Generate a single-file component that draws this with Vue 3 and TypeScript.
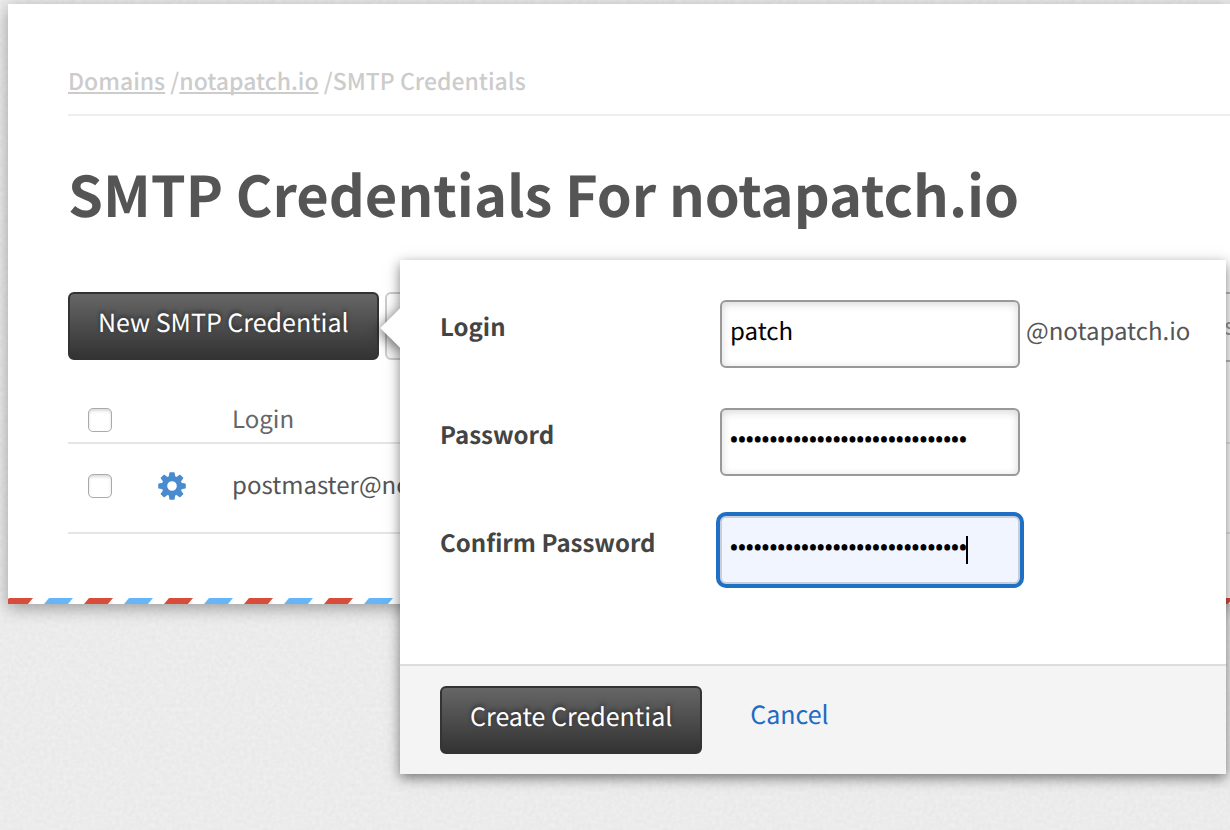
<script setup lang="ts">
import { onMounted, ref } from 'vue'

const domain = 'notapatch.io'
const login = ref('patch')
const password = ref('x'.repeat(30))
const confirmation = ref('x'.repeat(30))
const filter = ref('')
const allSelected = ref(false)
const credentials = ref([{ login: `postmaster@${domain}`, selected: false }])
const popoverOpen = ref(true)
const active = ref('confirm')
const confirmInput = ref<HTMLInputElement | null>(null)

onMounted(() => confirmInput.value?.focus({ preventScroll: true }))
</script>

<template>
  <main class="card">
    <nav class="breadcrumb" aria-label="Breadcrumb">
      <a href="#domains">Domains</a> /<a href="#domain">{{ domain }}</a> /<span>SMTP Credentials</span>
    </nav>
    <h1>SMTP Credentials For {{ domain }}</h1>

    <div class="toolbar">
      <div class="anchor">
        <button type="button" class="btn dark" @click="popoverOpen = !popoverOpen">New SMTP Credential</button>
        <form v-if="popoverOpen" class="popover" @submit.prevent>
          <div class="fields">
            <label for="login">Login</label>
            <div class="control">
              <input id="login" v-model="login" type="text" @focus="active = 'login'" />
              <span class="suffix">@{{ domain }}</span>
            </div>
            <label for="password">Password</label>
            <div class="control">
              <input id="password" v-model="password" type="password" @focus="active = 'password'" />
            </div>
            <label for="confirm">Confirm Password</label>
            <div class="control">
              <input
                id="confirm"
                ref="confirmInput"
                v-model="confirmation"
                type="password"
                :class="{ active: active === 'confirm' }"
                @focus="active = 'confirm'"
              />
              <span v-if="active === 'confirm'" class="caret"></span>
            </div>
          </div>
          <div class="actions">
            <button type="submit" class="btn dark">Create Credential</button>
            <a href="#cancel" @click.prevent="popoverOpen = false">Cancel</a>
          </div>
        </form>
      </div>
      <button type="button" class="btn light" aria-label="Delete"></button>
      <input v-model="filter" class="filter" type="text" placeholder="s" aria-label="Filter" />
    </div>

    <table>
      <thead>
        <tr>
          <th class="check"><input v-model="allSelected" type="checkbox" aria-label="Select all" /></th>
          <th class="gear"></th>
          <th class="text">Login</th>
        </tr>
      </thead>
      <tbody>
        <tr v-for="item in credentials" :key="item.login">
          <td class="check"><input v-model="item.selected" type="checkbox" :aria-label="item.login" /></td>
          <td class="gear">
            <button type="button" class="icon" aria-label="Settings">
              <svg width="28" height="28" viewBox="-14 -14 28 28">
                <g fill="#4a8bd0">
                  <path
                    v-for="n in 8"
                    :key="n"
                    :transform="`rotate(${n * 45})`"
                    d="M-3.4-8 L-2.6-13.2 Q-2.5-13.8-1.9-13.8 H1.9 Q2.5-13.8 2.6-13.2 L3.4-8Z"
                  />
                  <path fill-rule="evenodd" d="M0-10.2a10.2 10.2 0 1 0 0 20.4a10.2 10.2 0 1 0 0-20.4ZM0-4.8a4.8 4.8 0 1 1 0 9.6a4.8 4.8 0 1 1 0-9.6Z" />
                </g>
              </svg>
            </button>
          </td>
          <td class="text">{{ item.login }}</td>
        </tr>
      </tbody>
    </table>
    <div class="airmail"></div>
  </main>
</template>

<style>
body {
  margin: 0;
  min-height: 100vh;
  overflow: hidden;
  background-color: #e8e8e8;
  background-image: url("data:image/svg+xml,%3Csvg xmlns='http://www.w3.org/2000/svg' width='200' height='200'%3E%3Cfilter id='n' x='0' y='0' width='1' height='1'%3E%3CfeTurbulence type='fractalNoise' baseFrequency='.25' numOctaves='2' stitchTiles='stitch'/%3E%3CfeColorMatrix values='0 0 0 0 1 0 0 0 0 1 0 0 0 0 1 .5 0 0 0 -.1'/%3E%3C/filter%3E%3Crect width='200' height='200' filter='url(%23n)'/%3E%3C/svg%3E");
}
</style>

<style scoped>
* {
  box-sizing: border-box;
}
.card {
  margin: 4px 0 0 8px;
  padding-left: 60px;
  background: #fff;
  box-shadow: 0 4px 16px rgba(0, 0, 0, 0.35);
  color: #555;
  font-family: "Noto Sans CJK SC", "Noto Sans", sans-serif;
  font-size: 24px;
  line-height: 36px;
  text-rendering: geometricPrecision;
}
.breadcrumb {
  padding: 58px 0 16px;
  border-bottom: 2px solid #eee;
  color: #ccc;
  font-size: 23px;
  font-weight: 500;
}
.breadcrumb a {
  color: inherit;
  text-decoration-thickness: 2px;
  text-underline-offset: 2px;
  text-decoration-skip-ink: none;
}
h1 {
  margin: 30px 0 50px;
  font-size: 56px;
  line-height: 96px;
  font-weight: 700;
  white-space: nowrap;
}
.toolbar {
  display: flex;
  gap: 6px;
}
.anchor {
  position: relative;
}
.btn {
  height: 68px;
  padding: 0 28px 8px;
  border: 2px solid #333;
  border-radius: 6px;
  font: inherit;
  font-size: 25px;
  text-rendering: inherit;
  white-space: nowrap;
}
.dark {
  background: linear-gradient(#666, #333);
  color: #fff;
  text-shadow: 0 -2px 4px rgba(0, 0, 0, 0.5);
}
.light {
  width: 120px;
  border-color: #ccc;
  background: linear-gradient(#fff, #f4f4f4);
}
.filter {
  width: 300px;
  height: 70px;
  margin-left: auto;
  padding: 0 0 6px 292px;
  border: 2px solid #bbb;
  border-right: 0;
  border-radius: 6px 0 0 6px;
  font: inherit;
}
.filter::placeholder {
  color: #999;
}
.popover {
  position: absolute;
  z-index: 2;
  top: -32px;
  left: 332px;
  width: 826px;
  background: #fff;
  box-shadow: 0 4px 12px rgba(0, 0, 0, 0.5);
}
.popover::before {
  content: "";
  position: absolute;
  z-index: -1;
  top: 54px;
  left: -14px;
  width: 28px;
  height: 28px;
  background: #fff;
  box-shadow: 0 4px 12px rgba(0, 0, 0, 0.5);
  transform: rotate(45deg);
}
.fields {
  display: grid;
  grid-template-columns: 280px 1fr;
  row-gap: 40px;
  padding: 40px 40px 80px;
  background: #fff;
}
.fields label {
  padding-top: 8px;
  color: #444;
  font-weight: 700;
}
.control {
  position: relative;
  display: flex;
  gap: 6px;
}
.control input {
  width: 300px;
  height: 68px;
  padding: 0 8px 10px;
  border: 2px solid #999;
  border-radius: 6px;
  outline: none;
  background: #fff;
  box-shadow: inset 0 2px 8px rgba(0, 0, 0, 0.16);
  color: #000;
  font: inherit;
  text-rendering: inherit;
}
.control input[type="password"] {
  padding-bottom: 4px;
  font-family: "Open Sans", sans-serif;
  font-size: 21px;
  font-weight: 700;
}
.control input.active {
  border-color: #c9ced9;
  background: #f1f5ff;
  box-shadow: 0 0 0 4px #1f6fc5;
  caret-color: transparent;
}
.caret {
  position: absolute;
  top: 20px;
  left: 246px;
  width: 2px;
  height: 28px;
  background: #000;
}
.suffix {
  padding-top: 12px;
}
.actions {
  display: flex;
  gap: 48px;
  padding: 20px 40px;
  border-top: 2px solid #ddd;
  background: #f4f4f4;
}
.actions a {
  padding-top: 10px;
  color: #1f6bc4;
  font-size: 25px;
  text-decoration: none;
}
table {
  width: 100%;
  margin-top: 38px;
  border-collapse: separate;
  border-spacing: 0;
  table-layout: fixed;
}
th,
td {
  padding: 0 0 2px;
  border-bottom: 2px solid #e5e5e5;
  text-align: left;
  white-space: nowrap;
}
th {
  height: 44px;
  color: #666;
  font-weight: 400;
}
td {
  height: 90px;
  padding-bottom: 4px;
}
th.text {
  padding-bottom: 6px;
}
td.text {
  padding-bottom: 8px;
}
.check {
  width: 90px;
  padding-left: 20px;
}
.gear {
  width: 74px;
}
.check input {
  display: block;
  appearance: none;
  width: 24px;
  height: 24px;
  margin: 0;
  border: 1px solid #aaa;
  border-radius: 5px;
  background: #fff;
  box-shadow: inset 0 2px 3px rgba(0, 0, 0, 0.15);
}
.icon {
  display: block;
  padding: 0;
  border: 0;
  background: none;
}
.icon svg {
  display: block;
}
.airmail {
  height: 6px;
  margin: 64px 0 0 -60px;
  background: url("data:image/svg+xml,%3Csvg xmlns='http://www.w3.org/2000/svg' width='80' height='6'%3E%3Cpath fill='%23d94c3a' d='M0 6L5 0H29L24 6Z'/%3E%3Cpath fill='%2366b5f8' d='M40 6L45 0H69L64 6Z'/%3E%3C/svg%3E") -4px 0 repeat-x;
}
</style>
